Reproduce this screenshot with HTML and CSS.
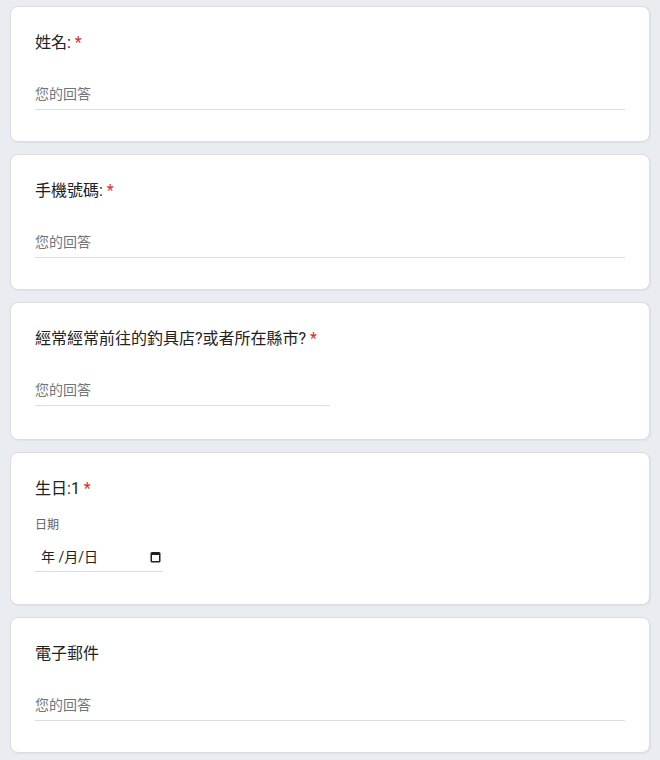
FILE: index.html
```html
<!DOCTYPE html>
<html lang="zh-Hant">
<head>
<meta charset="utf-8">
<title>表單</title>
<link rel="stylesheet" href="styles.css">
</head>
<body>
<main class="form">
  <section class="card">
    <div class="q-title">姓名: <span class="req">*</span></div>
    <div class="answer"><span class="placeholder">您的回答</span></div>
  </section>
  <section class="card">
    <div class="q-title">手機號碼: <span class="req">*</span></div>
    <div class="answer"><span class="placeholder">您的回答</span></div>
  </section>
  <section class="card card-tall">
    <div class="q-title">經常經常前往的釣具店?或者所在縣市? <span class="req">*</span></div>
    <div class="answer answer-half"><span class="placeholder">您的回答</span></div>
  </section>
  <section class="card card-date">
    <div class="q-title">生日:1 <span class="req">*</span></div>
    <div class="date-label">日期</div>
    <div class="date-input">
      <span class="date-text">年 /月/日</span>
      <svg class="cal-icon" width="11" height="12" viewBox="0 0 11 12" aria-hidden="true">
        <rect x="0.5" y="1" width="10" height="10.5" rx="1.5" fill="#202124"/>
        <rect x="2" y="4" width="7" height="6" fill="#ffffff"/>
      </svg>
    </div>
  </section>
  <section class="card">
    <div class="q-title">電子郵件</div>
    <div class="answer"><span class="placeholder">您的回答</span></div>
  </section>
</main>
</body>
</html>
```
FILE: styles.css
```css
html, body {
  margin: 0;
  padding: 0;
  background: #e9edf1;
}
body {
  font-family: Roboto, "Noto Sans CJK TC", sans-serif;
  color: #202124;
}
.form {
  display: flex;
  flex-direction: column;
  gap: 12px;
  padding: 6px 10px 10px;
}
.card {
  background: #ffffff;
  border: 1px solid #dadce0;
  border-radius: 8px;
  padding: 24px 24px 31px;
  box-shadow: 1px 1px 2px rgba(60, 64, 67, 0.06);
}
.card-tall {
  padding-bottom: 33px;
}
.q-title {
  font-size: 16px;
  line-height: 24px;
  height: 24px;
  letter-spacing: 0;
}
.req {
  color: #d93025;
}
.answer {
  margin-top: 23px;
  border-bottom: 1px solid #dadce0;
  display: flex;
  align-items: center;
  padding-top: 1px;
  box-sizing: border-box;
  height: 32px;
}
.answer-half {
  width: 50%;
}
.placeholder {
  font-size: 14px;
  line-height: 20px;
  color: #70757a;
}
.card-date {
  padding-bottom: 32px;
}
.date-label {
  margin-top: 15px;
  font-size: 12px;
  line-height: 18px;
  color: #5f6368;
}
.date-input {
  margin-top: 8px;
  width: 128px;
  border-bottom: 1px solid #dadce0;
  display: flex;
  align-items: center;
  justify-content: space-between;
  padding: 0 2px 0 6px;
  box-sizing: border-box;
  height: 30px;
}
.date-text {
  font-size: 14px;
  line-height: 20px;
  color: #202124;
}
.cal-icon {
  display: block;
}
```
